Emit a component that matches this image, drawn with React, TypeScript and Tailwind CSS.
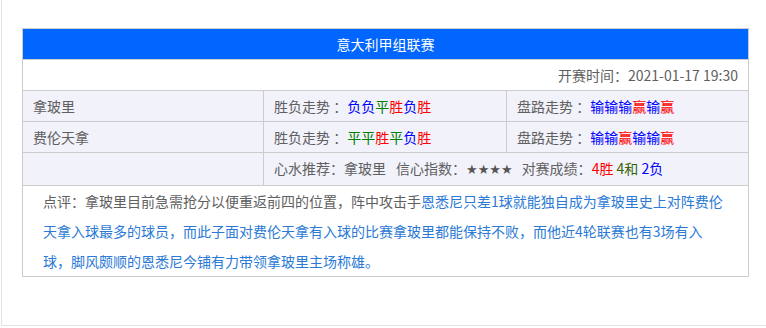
const FONT = '"Noto Sans CJK SC", "Microsoft YaHei", sans-serif'

// 走势颜色
const trendColor: Record<string, string> = {
  胜: 'text-[#ff0000]',
  赢: 'text-[#ff0000]',
  平: 'text-[#008000]',
  负: 'text-[#0000ff]',
  输: 'text-[#0000ff]',
}

function Trend({ value }: { value: string }) {
  return (
    <>
      {value.split('').map((c, i) => (
        <span key={i} className={trendColor[c]}>{c}</span>
      ))}
    </>
  )
}

const rows = [
  { team: '拿玻里', wl: '负负平胜负胜', pan: '输输输赢输赢' },
  { team: '费伦天拿', wl: '平平胜平负胜', pan: '输输赢输输赢' },
]

export default function App() {
  return (
    <div
      className="ml-px h-[326px] bg-white border-l border-b border-[#e3e3e3] pl-5 pt-[28px] text-[14px] text-[#606060]"
      style={{ fontFamily: FONT }}
    >
      <table className="w-[726px] border-collapse table-fixed">
        <colgroup>
          <col className="w-[241px]" />
          <col className="w-[243px]" />
          <col className="w-[242px]" />
        </colgroup>
        <tbody>
          <tr>
            <td colSpan={3} className="h-[31px] border border-[#cccccc] bg-[#0066ff] text-center text-white leading-[30px] p-0">
              意大利甲组联赛
            </td>
          </tr>
          <tr>
            <td colSpan={3} className="h-[31px] border border-[#cccccc] bg-white text-right pr-[10px] leading-[30px]">
              开赛时间：2021-01-17 19:30
            </td>
          </tr>
          {rows.map((r) => (
            <tr key={r.team} className="bg-[#f2f2fb]">
              <td className="h-[31px] border border-[#cccccc] pl-[10px] leading-[30px]">{r.team}</td>
              <td className="border border-[#cccccc] pl-[10px] leading-[30px]">
                胜负走势 ：<Trend value={r.wl} />
              </td>
              <td className="border border-[#cccccc] pl-[10px] leading-[30px]">
                盘路走势 ：<Trend value={r.pan} />
              </td>
            </tr>
          ))}
          <tr className="bg-[#f2f2fb]">
            <td className="h-[31px] border border-[#cccccc]"></td>
            <td colSpan={2} className="border border-[#cccccc] pl-[10px] leading-[30px] whitespace-nowrap">
              心水推荐：拿玻里
              <span className="ml-[10px]">信心指数：</span>
              <span style={{ fontFamily: '"DejaVu Sans", sans-serif' }} className="text-[13px] text-[#555]">★★★★</span>
              <span className="ml-[9px]">对赛成绩：</span>
              <span className="text-[#ff0000]">4胜</span>{' '}
              <span className="text-[#336600]">4和</span>{' '}
              <span className="text-[#0000ff]">2负</span>
            </td>
          </tr>
          <tr>
            <td colSpan={3} className="border border-[#cccccc] bg-white px-5 py-0">
              <p className="leading-[30px] h-[90px] overflow-hidden">
                <span>点评：拿玻里目前急需抢分以便重返前四的位置，阵中攻击手</span>
                <span className="text-[#2a7ad6]">
                  恩悉尼只差1球就能独自成为拿玻里史上对阵费伦天拿入球最多的球员，而此子面对费伦天拿有入球的比赛拿玻里都能保持不败，而他近4轮联赛也有3场有入球，脚风颇顺的恩悉尼今铺有力带领拿玻里主场称雄。
                </span>
              </p>
            </td>
          </tr>
        </tbody>
      </table>
    </div>
  )
}
